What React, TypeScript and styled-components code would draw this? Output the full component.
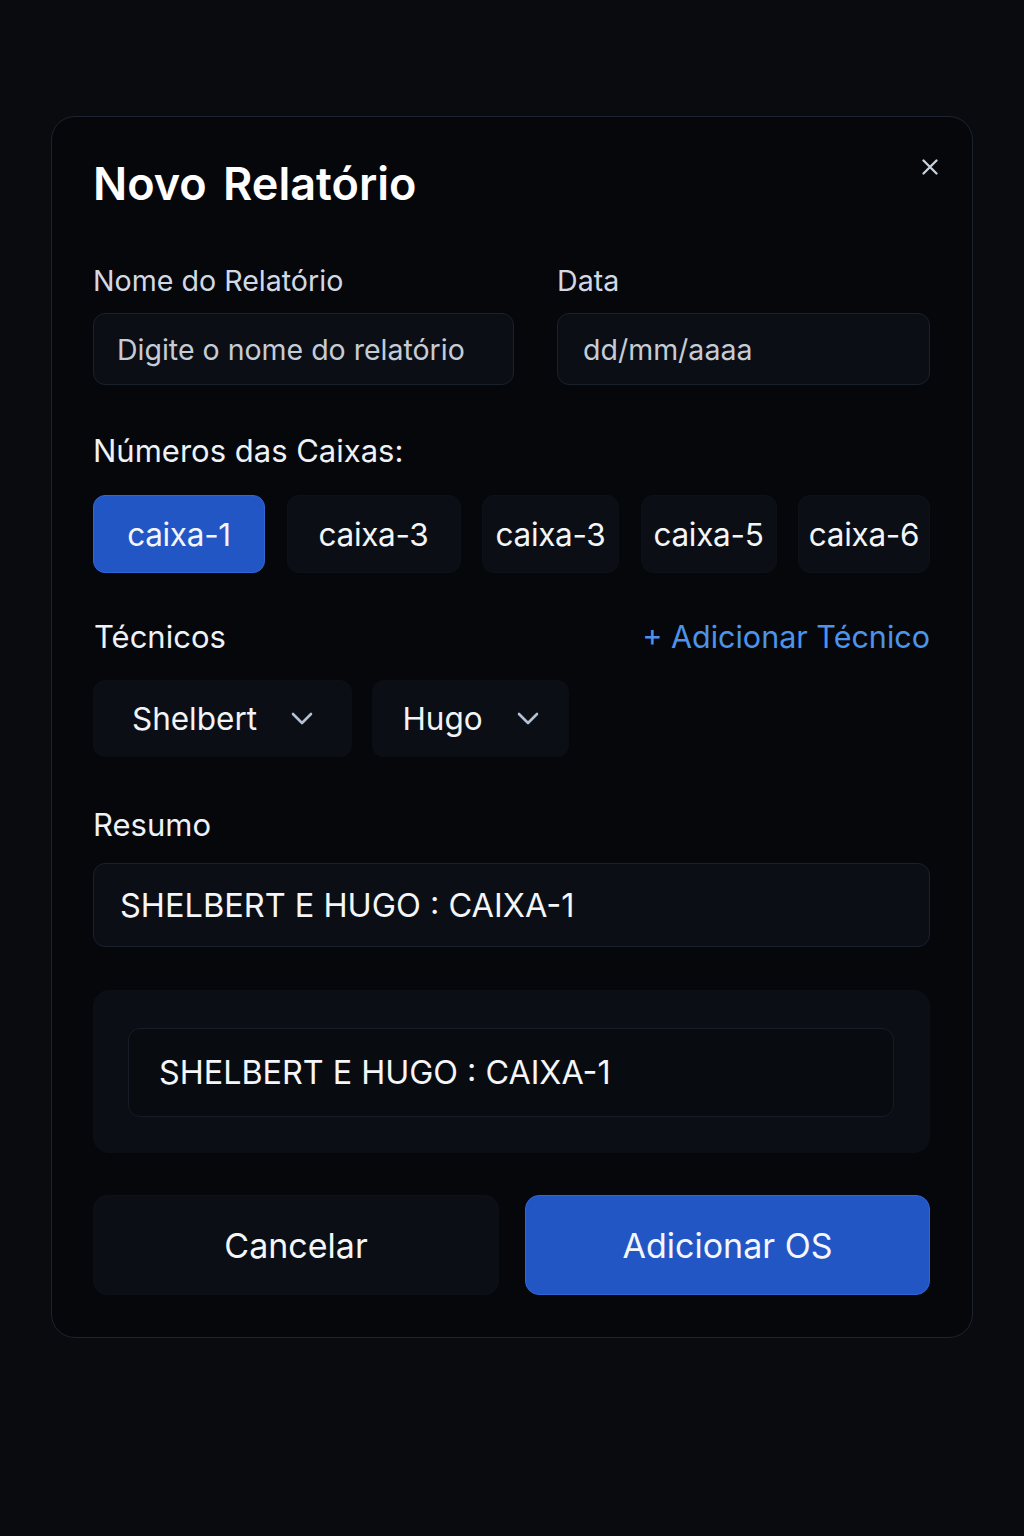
import React from "react"
import styled, { createGlobalStyle } from "styled-components"

const GlobalStyle = createGlobalStyle`
  html, body {
    margin: 0;
    padding: 0;
    background: #0a0b0e;
  }
  body {
    font-family: Inter, "Noto Sans", "Liberation Sans", sans-serif;
    color: #f1f3f6;
    -webkit-font-smoothing: antialiased;
  }
`

const Page = styled.div`
  min-height: 1536px;
  padding: 116px 0 0 51px;
  box-sizing: border-box;
`

const Card = styled.div`
  width: 922px;
  box-sizing: border-box;
  background: #05070b;
  border: 1px solid #1b2430;
  border-radius: 24px;
  padding: 40px 42px 42px 41px;
`

const Header = styled.div`
  display: flex;
  justify-content: space-between;
  align-items: flex-start;
`

const Title = styled.h1`
  margin: 0;
  font-size: 45px;
  line-height: 54px;
  font-weight: 600;
  color: #ffffff;
  word-spacing: 5px;
`

const CloseButton = styled.button`
  width: 24px;
  height: 24px;
  margin: -2px -12px 0 0;
  padding: 0;
  border: none;
  background: transparent;
  display: flex;
  align-items: center;
  justify-content: center;
  color: #c9d1dc;
`

const Row = styled.div`
  display: grid;
  grid-template-columns: 421px 373px;
  column-gap: 43px;
  margin-top: 53px;
`

const Field = styled.div`
  display: flex;
  flex-direction: column;
  gap: 15px;
`

const Label = styled.label`
  font-size: 28.6px;
  line-height: 34px;
  font-weight: 400;
  color: #d3d9e3;
`

const Input = styled.div<{ $pad?: number }>`
  height: 72px;
  box-sizing: border-box;
  background: #0b0f15;
  border: 1px solid #19212c;
  border-radius: 12px;
  display: flex;
  align-items: center;
  padding-left: ${(p) => p.$pad ?? 23}px;
  font-size: 28.5px;
  color: #c6ccd5;
`

const SectionTitle = styled.div<{ $top: number; $gap: number }>`
  margin-top: ${(p) => p.$top}px;
  margin-bottom: ${(p) => p.$gap}px;
  font-size: 31px;
  line-height: 36px;
  color: #eef1f5;
`

const Chips = styled.div`
  display: flex;
  justify-content: space-between;
`

const Chip = styled.button<{ $active?: boolean }>`
  height: 78px;
  box-sizing: border-box;
  border-radius: 12px;
  border: 1px solid ${(p) => (p.$active ? "#2f66d8" : "#0d1118")};
  background: ${(p) => (p.$active ? "#2356c5" : "#0b0f15")};
  color: #f3f5f8;
  font-family: inherit;
  font-size: 31.5px;
  letter-spacing: -0.3px;
  padding: 0;
  display: flex;
  align-items: center;
  justify-content: center;
`

const TechHeader = styled.div`
  display: flex;
  justify-content: space-between;
  align-items: center;
  margin-top: 46px;
  margin-bottom: 25px;
  font-size: 31px;
  line-height: 36px;
`

const TechLabel = styled.span`
  color: #eef1f5;
  padding-left: 1px;
`

const AddLink = styled.a`
  color: #4d93ea;
  text-decoration: none;
  font-size: 30.5px;
`

const Selects = styled.div`
  display: flex;
  gap: 20px;
`

const Select = styled.div`
  height: 77px;
  box-sizing: border-box;
  background: #0b0f15;
  border-radius: 12px;
  display: flex;
  align-items: center;
  justify-content: center;
  gap: 34px;
  font-size: 31.5px;
  color: #f1f3f6;
`

const SummaryInput = styled.div`
  height: 84px;
  box-sizing: border-box;
  background: #0b0f15;
  border: 1px solid #19212c;
  border-radius: 12px;
  display: flex;
  align-items: center;
  padding-left: 26px;
  font-size: 32.5px;
  color: #f4f6f9;
`

const Preview = styled.div`
  margin-top: 43px;
  background: #0b0f15;
  border-radius: 16px;
  padding: 38px 36px 36px 35px;
`

const PreviewLine = styled.div`
  height: 89px;
  box-sizing: border-box;
  background: #080b10;
  border: 1px solid #161d27;
  border-radius: 12px;
  display: flex;
  align-items: center;
  padding-left: 30px;
  font-size: 32.3px;
  color: #f4f6f9;
`

const Actions = styled.div`
  display: grid;
  grid-template-columns: 406px 405px;
  column-gap: 26px;
  margin-top: 42px;
`

const ActionButton = styled.button<{ $primary?: boolean }>`
  height: 100px;
  border-radius: 14px;
  border: 1px solid ${(p) => (p.$primary ? "#2f66d8" : "#0c1017")};
  background: ${(p) => (p.$primary ? "#2356c5" : "#0b0f15")};
  color: #f4f6f9;
  font-family: inherit;
  font-size: 34px;
  font-weight: 400;
`

const chips = [
  { label: "caixa-1", width: 172, active: true },
  { label: "caixa-3", width: 174 },
  { label: "caixa-3", width: 137 },
  { label: "caixa-5", width: 136 },
  { label: "caixa-6", width: 132 },
]

const techs = [
  { name: "Shelbert", width: 259 },
  { name: "Hugo", width: 197 },
]

const Chevron = () => (
  <svg width="22" height="13" viewBox="0 0 22 13" fill="none">
    <path d="M2 2l9 9 9-9" stroke="#b4c0d4" strokeWidth="2.6" strokeLinecap="round" strokeLinejoin="round" />
  </svg>
)

const summary = "SHELBERT E HUGO : CAIXA-1"

export default function App() {
  return (
    <>
      <GlobalStyle />
      <Page>
        <Card>
          <Header>
            <Title>Novo Relatório</Title>
            <CloseButton aria-label="Fechar">
              <svg width="16" height="16" viewBox="0 0 16 16">
                <path d="M1.5 1.5l13 13M14.5 1.5l-13 13" stroke="currentColor" strokeWidth="2.3" strokeLinecap="round" />
              </svg>
            </CloseButton>
          </Header>

          <Row>
            <Field>
              <Label>Nome do Relatório</Label>
              <Input>Digite o nome do relatório</Input>
            </Field>
            <Field>
              <Label>Data</Label>
              <Input $pad={25}>dd/mm/aaaa</Input>
            </Field>
          </Row>

          <SectionTitle $top={48} $gap={26}>Números das Caixas:</SectionTitle>
          <Chips>
            {chips.map((c, i) => (
              <Chip key={i} $active={c.active} style={{ width: c.width }}>
                {c.label}
              </Chip>
            ))}
          </Chips>

          <TechHeader>
            <TechLabel>Técnicos</TechLabel>
            <AddLink href="#">+ Adicionar Técnico</AddLink>
          </TechHeader>
          <Selects>
            {techs.map((t) => (
              <Select key={t.name} style={{ width: t.width }}>
                <span>{t.name}</span>
                <Chevron />
              </Select>
            ))}
          </Selects>

          <SectionTitle $top={50} $gap={20}>Resumo</SectionTitle>
          <SummaryInput>{summary}</SummaryInput>

          <Preview>
            <PreviewLine>{summary}</PreviewLine>
          </Preview>

          <Actions>
            <ActionButton>Cancelar</ActionButton>
            <ActionButton $primary>Adicionar OS</ActionButton>
          </Actions>
        </Card>
      </Page>
    </>
  )
}
